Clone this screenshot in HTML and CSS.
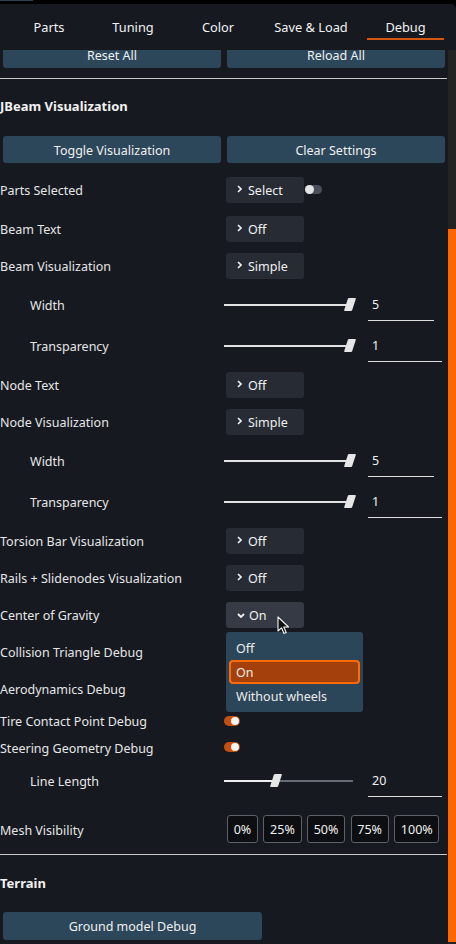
FILE: index.html
```html
<!DOCTYPE html>
<html lang="en">
<head>
<meta charset="utf-8">
<title>Debug</title>
<link rel="stylesheet" href="styles.css">
</head>
<body>
<div class="topstrip"><span class="topstrip-blue"></span></div>
<div class="panel">
  <nav class="tabs">
    <div class="tab w-parts">Parts</div>
    <div class="tab w-tuning">Tuning</div>
    <div class="tab w-color">Color</div>
    <div class="tab w-save">Save &amp; Load</div>
    <div class="tab w-debug tab-active">Debug</div>
  </nav>
  <div class="main">
    <div class="viewport">
      <div class="content">
        <div class="btn-row">
          <div class="btn">Reset All</div>
          <div class="btn">Reload All</div>
        </div>
        <div class="divider"></div>
        <div class="section-title">JBeam Visualization</div>
        <div class="btn-row btn-row-gap">
          <div class="btn">Toggle Visualization</div>
          <div class="btn">Clear Settings</div>
        </div>

        <div class="row row-first">
          <div class="label">Parts Selected</div>
          <div class="select"><svg class="chev" width="5" height="8" viewBox="0 0 5 8"><polyline points="1,1 4,4 1,7"/></svg><span>Select</span></div>
          <div class="switch switch-off"><span class="knob"></span></div>
        </div>
        <div class="row">
          <div class="label">Beam Text</div>
          <div class="select"><svg class="chev" width="5" height="8" viewBox="0 0 5 8"><polyline points="1,1 4,4 1,7"/></svg><span>Off</span></div>
        </div>
        <div class="row">
          <div class="label">Beam Visualization</div>
          <div class="select"><svg class="chev" width="5" height="8" viewBox="0 0 5 8"><polyline points="1,1 4,4 1,7"/></svg><span>Simple</span></div>
        </div>
        <div class="row row-slider">
          <div class="label label-indent">Width</div>
          <div class="slider"><span class="track track-full"></span><span class="thumb thumb-max"></span></div>
          <div class="value value-short">5</div>
        </div>
        <div class="row row-slider">
          <div class="label label-indent">Transparency</div>
          <div class="slider"><span class="track track-full"></span><span class="thumb thumb-max"></span></div>
          <div class="value">1</div>
        </div>
        <div class="row">
          <div class="label">Node Text</div>
          <div class="select"><svg class="chev" width="5" height="8" viewBox="0 0 5 8"><polyline points="1,1 4,4 1,7"/></svg><span>Off</span></div>
        </div>
        <div class="row">
          <div class="label">Node Visualization</div>
          <div class="select"><svg class="chev" width="5" height="8" viewBox="0 0 5 8"><polyline points="1,1 4,4 1,7"/></svg><span>Simple</span></div>
        </div>
        <div class="row row-slider">
          <div class="label label-indent">Width</div>
          <div class="slider"><span class="track track-full"></span><span class="thumb thumb-max"></span></div>
          <div class="value value-short">5</div>
        </div>
        <div class="row row-slider">
          <div class="label label-indent">Transparency</div>
          <div class="slider"><span class="track track-full"></span><span class="thumb thumb-max"></span></div>
          <div class="value">1</div>
        </div>
        <div class="row">
          <div class="label">Torsion Bar Visualization</div>
          <div class="select"><svg class="chev" width="5" height="8" viewBox="0 0 5 8"><polyline points="1,1 4,4 1,7"/></svg><span>Off</span></div>
        </div>
        <div class="row">
          <div class="label">Rails + Slidenodes Visualization</div>
          <div class="select"><svg class="chev" width="5" height="8" viewBox="0 0 5 8"><polyline points="1,1 4,4 1,7"/></svg><span>Off</span></div>
        </div>
        <div class="row">
          <div class="label">Center of Gravity</div>
          <div class="select-wrap">
            <div class="select select-open"><svg class="chev-down" width="8" height="5" viewBox="0 0 8 5"><polyline points="1,1 4,4 7,1"/></svg><span>On</span></div>
            <div class="menu">
              <div class="menu-item">Off</div>
              <div class="menu-item menu-item-active">On</div>
              <div class="menu-item">Without wheels</div>
            </div>
            <svg class="cursor" width="13" height="19" viewBox="0 0 13 19"><path d="M1,1 L1,15 L4.5,11.8 L7,17.5 L9.2,16.5 L6.8,11 L11.5,11 Z"/></svg>
          </div>
        </div>
        <div class="row">
          <div class="label">Collision Triangle Debug</div>
        </div>
        <div class="row">
          <div class="label">Aerodynamics Debug</div>
        </div>
        <div class="row row-toggle-a">
          <div class="label">Tire Contact Point Debug</div>
          <div class="switch switch-on"><span class="knob"></span></div>
        </div>
        <div class="row row-toggle-b">
          <div class="label">Steering Geometry Debug</div>
          <div class="switch switch-on"><span class="knob"></span></div>
        </div>
        <div class="row row-slider">
          <div class="label label-indent">Line Length</div>
          <div class="slider"><span class="track track-fill"></span><span class="track track-rest"></span><span class="thumb thumb-mid"></span></div>
          <div class="value">20</div>
        </div>
        <div class="row row-mesh">
          <div class="label label-mesh">Mesh Visibility</div>
          <div class="mesh-btns">
            <div class="mesh-btn">0%</div>
            <div class="mesh-btn">25%</div>
            <div class="mesh-btn">50%</div>
            <div class="mesh-btn">75%</div>
            <div class="mesh-btn">100%</div>
          </div>
        </div>
        <div class="divider"></div>
        <div class="section-title section-title-terrain">Terrain</div>
        <div class="btn btn-ground">Ground model Debug</div>
      </div>
    </div>
    <div class="scrollbar"><div class="scroll-thumb"></div></div>
  </div>
</div>
</body>
</html>
```
FILE: styles.css
```css
* { box-sizing: border-box; margin: 0; padding: 0; }
html, body { width: 456px; height: 944px; overflow: hidden; background: #000; }
body { font-family: "Noto Sans", "DejaVu Sans", sans-serif; font-size: 12.5px; color: #e8e8e8; }

.topstrip { height: 4px; background: #000; }
.topstrip-blue { display: block; width: 33px; height: 1px; background: #2b4558; }

.panel { height: 940px; background: #161920; border-radius: 0 5px 0 0; overflow: hidden; display: flex; flex-direction: column; }

.tabs { display: flex; height: 46px; padding-left: 14px; flex-shrink: 0; }
.tab { height: 36px; padding-top: 11px; display: flex; align-items: center; justify-content: center; border-bottom: 2px solid transparent; color: #f2f2f2; font-size: 12.8px; white-space: nowrap; }
.tab-active { border-bottom-color: #d4560f; }
.w-parts { width: 70px; }
.w-tuning { width: 80px; margin-left: 9px; }
.w-color { width: 72px; margin-left: 9px; }
.w-save { width: 112px; margin-left: 1px; }
.w-debug { width: 77px; }

.main { display: flex; flex: 1; min-height: 0; }
.viewport { width: 448px; overflow: hidden; }
.content { margin-top: -9px; }
.scrollbar { width: 8px; background: #232323; }
.scroll-thumb { margin-top: 179px; height: 713px; background: #ff6600; }

.btn-row { display: flex; gap: 6px; padding: 0 3px; }
.btn-row-gap { margin-top: 20px; }
.btn { flex: 1; height: 27px; padding-top: 1px; background: #2c465a; border-radius: 3px; display: flex; align-items: center; justify-content: center; color: #f0f0f0; }
.btn-ground { width: 259px; flex: none; height: 28px; margin-left: 3px; margin-top: 19px; }

.divider { height: 1px; background: #c9c9c9; margin-top: 10px; width: 447px; }
.row-mesh + .divider { margin-top: 11px; }
.section-title { font-weight: 700; height: 20px; line-height: 20px; margin-top: 17px; font-size: 13px; color: #f2f2f2; }
.section-title-terrain { margin-top: 18px; }

.row { display: flex; align-items: center; height: 37px; }
.row-first { height: 41px; margin-top: 6px; }
.row-slider { height: 41px; }
.row-toggle-a { height: 27px; }
.row-toggle-b { height: 26px; }
.row-mesh { height: 28px; margin-top: 14px; }

.label { width: 224px; flex: none; white-space: nowrap; color: #e6e6e6; padding-top: 2px; }
.label-indent { padding-left: 30px; }
.label-mesh { width: 227px; }

.select { width: 78px; height: 26px; margin-left: 2px; background: #272b34; border-radius: 3px; display: flex; align-items: center; padding-left: 11px; padding-top: 1px; gap: 6px; color: #f0f0f0; flex: none; }
.select-open { background: #363a44; padding-left: 11px; gap: 4px; margin-left: 0; }
.chev { fill: none; stroke: #f0f0f0; stroke-width: 1.6; margin-top: -3px; }
.chev-down { fill: none; stroke: #f0f0f0; stroke-width: 1.8; }
.select-wrap { position: relative; margin-left: 2px; }

.menu { position: absolute; left: 0; top: 30px; width: 137px; height: 80px; background: #2c4659; border-radius: 3px; padding-top: 4px; z-index: 2; }
.menu-item { height: 24px; display: flex; align-items: center; padding-left: 10px; padding-top: 1px; color: #ececec; white-space: nowrap; }
.menu-item-active { margin: 0 3px; padding-left: 5px; background: #a4400b; border: 2px solid #ff6b00; border-radius: 4px; }

.cursor { position: absolute; left: 51px; top: 14px; z-index: 3; }
.cursor path { fill: #111; stroke: #f4f4f4; stroke-width: 1.1; stroke-linejoin: round; }

.switch { display: flex; align-items: center; flex: none; }
.switch-off { width: 17px; height: 9px; border-radius: 5px; background: #4b4f58; margin-left: 1px; }
.switch-off .knob { width: 9px; height: 9px; border-radius: 50%; background: #e4e4e4; }
.switch-on { width: 16px; height: 10px; border-radius: 5px; background: #c44f0e; justify-content: flex-end; padding-right: 1px; }
.switch-on .knob { width: 8px; height: 8px; border-radius: 50%; background: #f4f4f4; }

.slider { position: relative; width: 130px; height: 14px; display: flex; align-items: center; flex: none; }
.track { height: 2px; display: block; }
.track-full { width: 127px; background: #e2e2e2; }
.track-fill { width: 52px; background: #ececec; }
.track-rest { width: 77px; background: #676b75; }
.thumb { position: absolute; top: 0; width: 8px; height: 13px; background: #e6e6e6; transform: skewX(-18deg); border-radius: 1px; }
.thumb-max { left: 122px; }
.thumb-mid { left: 48px; }

.value { margin-left: 14px; width: 74px; height: 32px; padding-top: 1px; border-bottom: 1px solid #dcdcdc; display: flex; align-items: center; padding-left: 4px; color: #f0f0f0; flex: none; }
.value-short { width: 66px; }

.mesh-btns { display: flex; gap: 5.5px; }
.mesh-btn { height: 28px; padding: 0 5.7px; border: 1px solid #5c6068; border-radius: 3px; background: #0d0e11; display: flex; align-items: center; color: #f0f0f0; }
```
